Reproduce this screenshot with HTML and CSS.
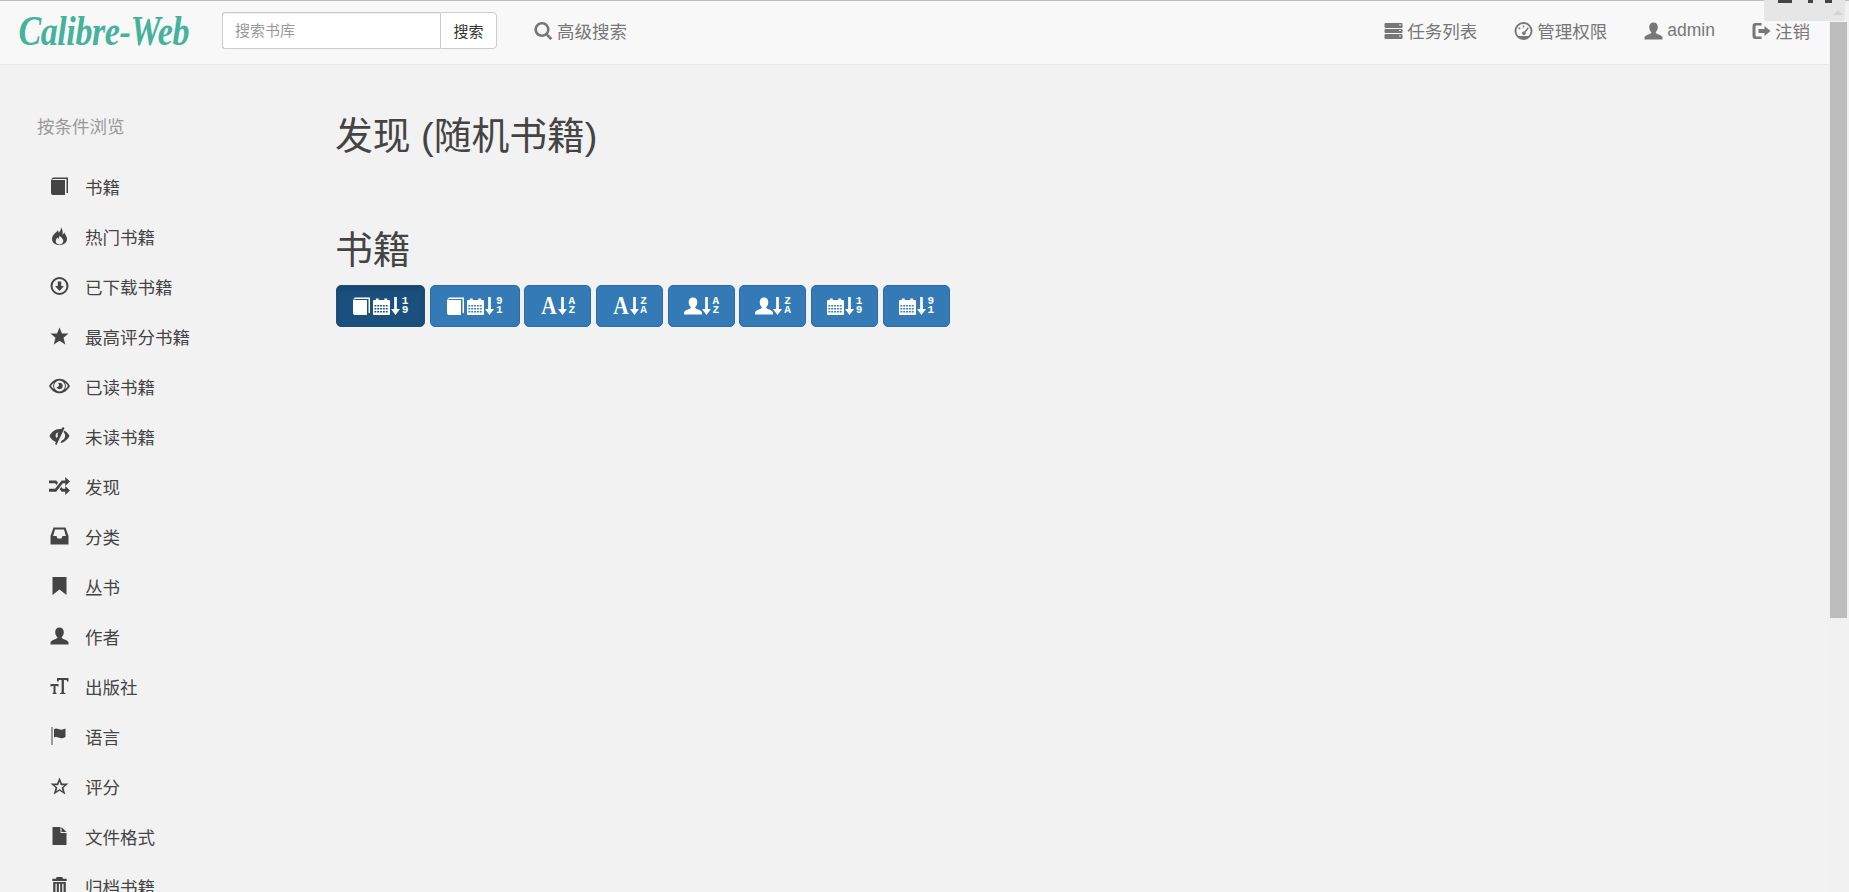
FILE: index.html
```html
<!DOCTYPE html>
<html lang="zh">
<head>
<meta charset="utf-8">
<title>Calibre-Web</title>
<link rel="stylesheet" href="styles.css">
</head>
<body>
<svg class="defs" width="0" height="0" aria-hidden="true">
  <defs>
    <symbol id="i-book" viewBox="0 0 17 18"><path d="M0 3h14v15H2a2 2 0 0 1-2-2ZM0 2.500 2 .5h15V16h-1.500V2H2.500L1.500 2.500Z"/></symbol>
    <symbol id="i-cal" viewBox="0 0 18 18" preserveAspectRatio="none"><path fill-rule="evenodd" d="M1 3h2V1.500h3V3h6V1.500h3V3h2a1 1 0 0 1 1 1v13a1 1 0 0 1-1 1H1a1 1 0 0 1-1-1V4a1 1 0 0 1 1-1Zm.5 5v1.500h2V8Zm3 0v1.500h2V8Zm3 0v1.500h2V8Zm3 0v1.500h2V8Zm3 0v1.500h2V8Zm-12 3v1.500h2V11Zm3 0v1.500h2V11Zm3 0v1.500h2V11Zm3 0v1.500h2V11Zm3 0v1.500h2V11Zm-12 3v1.500h2V14Zm3 0v1.500h2V14Zm3 0v1.500h2V14Zm3 0v1.500h2V14Zm3 0v1.500h2V14Z"/></symbol>
    <symbol id="i-arrow" viewBox="0 0 10 18" preserveAspectRatio="none"><path d="M3.500 0h3v12H10l-5 6-5-6h3.500Z"/></symbol>
    <symbol id="i-user" viewBox="0 0 18 18"><path d="M9 .5c2.700 0 4.300 2 4.300 4.700 0 2.300-1 4-2.200 5 .2 1 1 1.500 3 2.200 2 .7 3.400 1.500 3.900 3.100V17.500H0v-2c.5-1.600 1.900-2.400 3.900-3.100 2-.7 2.800-1.200 3-2.200-1.200-1-2.200-2.700-2.200-5C4.700 2.500 6.300.5 9 .5Z"/></symbol>
    <symbol id="i-fire" viewBox="0 0 17 18"><path fill-rule="evenodd" d="M9.500 0c1.200 2.600-.4 4.300-2 5.900C7.700 4.700 7.300 3.700 6.500 3.200 6 5.700 1 7.200 1 12c0 3.400 3 6 7.500 6S16 15.400 16 12c0-3.200-2.200-4.800-2.800-6.800-.3 1.100-.9 2-1.700 2.600C12.100 4.800 11.500 1.800 9.500 0ZM8.700 8.500c.5 1.700 3.600 2.700 3.600 5.600 0 2-1.700 3.400-3.800 3.400s-3.800-1.400-3.800-3.400c0-1.700 1.100-2.400 1.700-3.500.5.500.8.900.9 1.500.7-1 .8-2.300 1.400-3.600Z"/></symbol>
    <symbol id="i-down" viewBox="0 0 18 18"><path fill-rule="evenodd" d="M9 0a9 9 0 1 1 0 18A9 9 0 0 1 9 0Zm0 2a7 7 0 1 0 0 14A7 7 0 0 0 9 2ZM7.300 4.500h3.400V9H13.500L9 14 4.500 9h2.800Z"/></symbol>
    <symbol id="i-star" viewBox="0 0 18 18"><path d="m9 .5 2.500 6H18l-5 4.200 1.800 6.800L9 13.700 3.200 17.500 5 10.700 0 6.500h6.500Z"/></symbol>
    <symbol id="i-star-o" viewBox="0 0 18 18"><path fill-rule="evenodd" d="m9 .5 2.500 6H18l-5 4.200 1.800 6.800L9 13.700 3.200 17.500 5 10.700 0 6.500h6.500Zm0 4.300L7.700 8.200H4l2.900 2.400-1 3.600L9 12.100l3.100 2.100-1-3.600L14 8.200h-3.700Z"/></symbol>
    <symbol id="i-eye" viewBox="0 0 20 14"><path fill-rule="evenodd" d="M10 0c4.500 0 8 3.200 10 7-2 3.800-5.500 7-10 7S2 10.800 0 7c2-3.800 5.500-7 10-7Zm0 1.800A5.200 5.200 0 1 0 10 12.200 5.200 5.200 0 0 0 10 1.800ZM10 4a3 3 0 1 1-2.900 3.800c.8.400 2.300-.1 2.400-1.300.1-1-.5-1.900-1-2.100.4-.2 1-.4 1.500-.4ZM1.900 7c.7 1.100 1.600 2.100 2.700 2.900A6.500 6.500 0 0 1 4.600 4 10 10 0 0 0 1.900 7Zm13.500-3a6.500 6.500 0 0 1 0 6c1.100-.8 2-1.800 2.700-3a10 10 0 0 0-2.700-3Z"/></symbol>
    <symbol id="i-eye-off" viewBox="0 0 20 18"><path fill-rule="evenodd" d="M13.500 0 15 1 7 18l-1.500-1 .9-1.900C3.600 14 1.500 11.800 0 9c2-3.800 5.500-7 10-7h1.800ZM9 5.500A3 3 0 0 0 7.400 11l1-2.100C7.700 8.300 8 7 9 5.500Zm5.500-2C17 4.700 18.800 6.700 20 9c-1.800 3.500-5 6.500-9 6.900l1-2.200A5.200 5.200 0 0 0 14 5Z"/></symbol>
    <symbol id="i-shuffle" viewBox="0 0 22 16" preserveAspectRatio="none"><path d="M17 0l5 4-5 4V5.500h-2.500L7.500 13H0v-2.500h6.300L13.300 3H17ZM0 3h7.500l2 2.200-1.600 1.800-1.600-1.500H0Zm17 5 5 4-5 4v-3h-3.700l-2.200-2.400 1.700-1.800 1.600 1.700H17Z"/></symbol>
    <symbol id="i-inbox" viewBox="0 0 18 18"><path fill-rule="evenodd" d="M3 .5h12l3 8.500v8.500H0V9Zm1.500 2L2.600 9H6l1 2.500h4L12 9h3.400l-1.900-6.500Z"/></symbol>
    <symbol id="i-bookmark" viewBox="0 0 14 18"><path d="M0 0h14v18l-7-5.500L0 18Z"/></symbol>
    <symbol id="i-font" viewBox="0 0 18 18"><path d="M6.500 1H18v3.500h-1.500L16 3h-2.600v12.500l1.600.7V17H9.500v-.8l1.600-.7V3H8.500L8 4.500H6.500ZM0 7h8v2.500H7L6.700 9H5v6.500l1 .5v1H2v-1l1-.5V9H1.300L1 9.500H0Z"/></symbol>
    <symbol id="i-flag" viewBox="0 0 16 18"><path d="M0 0h1v18H0ZM2.500 2c2-1 3.500-.5 5 .2 2 .8 4 .5 6.500-.7V10c-2.500 1.300-4.500 1.600-6.500.8-1.500-.7-3-1-5-.2Z"/></symbol>
    <symbol id="i-file" viewBox="0 0 14 18"><path d="M0 0h8v6h6v12H0ZM9 0l5 5H9Z"/></symbol>
    <symbol id="i-trash" viewBox="0 0 18 20"><path fill-rule="evenodd" d="M6 0h6l1 2h4v2.500H1V2h4ZM2 5.500h14V20H2Zm2.500 2v10h1.500v-10Zm3.800 0v10h1.500v-10Zm3.700 0v10h1.500v-10Z"/></symbol>
    <symbol id="i-search" viewBox="0 0 18 18"><path fill-rule="evenodd" d="M7.500 0a7.500 7.500 0 0 1 6 12l4.300 4.200-2 1.800-4.200-4.300A7.500 7.500 0 1 1 7.500 0Zm0 2.500a5 5 0 1 0 0 10 5 5 0 0 0 0-10Z"/></symbol>
    <symbol id="i-tasks" viewBox="0 0 18 18"><path fill-rule="evenodd" d="M1 1h16a1 1 0 0 1 1 1v3a1 1 0 0 1-1 1H1a1 1 0 0 1-1-1V2a1 1 0 0 1 1-1Zm0 6h16a1 1 0 0 1 1 1v2a1 1 0 0 1-1 1H1a1 1 0 0 1-1-1V8a1 1 0 0 1 1-1Zm0 5h16a1 1 0 0 1 1 1v3a1 1 0 0 1-1 1H1a1 1 0 0 1-1-1v-3a1 1 0 0 1 1-1Zm13.500-9.500v1h2v-1Zm0 5.500v1h2V8Zm0 5.500v1h2v-1Z"/></symbol>
    <symbol id="i-dash" viewBox="0 0 18 18"><path fill-rule="evenodd" d="M9 0a9 9 0 1 1 0 18A9 9 0 0 1 9 0Zm0 2a7 7 0 0 0-5 11.900h10A7 7 0 0 0 9 2ZM8.300 3.500h1.400v2H8.300Zm-3.600 1.700 1.400 1.400-1 1-1.400-1.400Zm8.600 0 1 1-3.300 4.300a1.800 1.800 0 1 1-1.200-1Z"/></symbol>
    <symbol id="i-logout" viewBox="0 0 18 18"><path d="M3 1h6v2.500H4a1 1 0 0 0-1 1v9a1 1 0 0 0 1 1h5V17H3a3 3 0 0 1-3-3V4a3 3 0 0 1 3-3Zm9 3 6 5-6 5v-3H6V7h6Z"/></symbol>
  </defs>
</svg>

<header class="topbar">
  <div class="logo-box"><a class="logo">Calibre-Web</a></div>
  <form class="search">
    <input class="search-input" type="text" placeholder="搜索书库">
    <button class="search-btn" type="button">搜索</button>
  </form>
  <a class="nav-link adv"><svg class="nav-icon"><use href="#i-search"/></svg>高级搜索</a>
  <nav class="nav-right">
    <a class="nav-link"><svg class="nav-icon"><use href="#i-tasks"/></svg>任务列表</a>
    <a class="nav-link"><svg class="nav-icon"><use href="#i-dash"/></svg>管理权限</a>
    <a class="nav-link"><svg class="nav-icon"><use href="#i-user"/></svg>admin</a>
    <a class="nav-link"><svg class="nav-icon"><use href="#i-logout"/></svg>注销</a>
  </nav>
</header>

<div class="layout">
  <aside class="sidebar">
    <div class="side-title">按条件浏览</div>
    <ul class="side-list">
      <li><svg class="side-icon"><use href="#i-book"/></svg>书籍</li>
      <li><svg class="side-icon"><use href="#i-fire"/></svg>热门书籍</li>
      <li><svg class="side-icon"><use href="#i-down"/></svg>已下载书籍</li>
      <li><svg class="side-icon"><use href="#i-star"/></svg>最高评分书籍</li>
      <li><svg class="side-icon"><use href="#i-eye"/></svg>已读书籍</li>
      <li><svg class="side-icon"><use href="#i-eye-off"/></svg>未读书籍</li>
      <li><svg class="side-icon"><use href="#i-shuffle"/></svg>发现</li>
      <li><svg class="side-icon"><use href="#i-inbox"/></svg>分类</li>
      <li><svg class="side-icon"><use href="#i-bookmark"/></svg>丛书</li>
      <li><svg class="side-icon"><use href="#i-user"/></svg>作者</li>
      <li><svg class="side-icon"><use href="#i-font"/></svg>出版社</li>
      <li><svg class="side-icon"><use href="#i-flag"/></svg>语言</li>
      <li><svg class="side-icon"><use href="#i-star-o"/></svg>评分</li>
      <li><svg class="side-icon"><use href="#i-file"/></svg>文件格式</li>
      <li><svg class="side-icon"><use href="#i-trash"/></svg>归档书籍</li>
    </ul>
  </aside>
  <main class="content">
    <h1 class="page-title">发现 (随机书籍)</h1>
    <h2 class="section-title">书籍</h2>
    <div class="sort-bar">
      <a class="sort-btn wide active"><svg class="b-book"><use href="#i-book"/></svg><svg class="b-cal"><use href="#i-cal"/></svg><svg class="b-arrow"><use href="#i-arrow"/></svg><span class="stack"><i>1</i><i>9</i></span></a>
      <a class="sort-btn wide"><svg class="b-book"><use href="#i-book"/></svg><svg class="b-cal"><use href="#i-cal"/></svg><svg class="b-arrow"><use href="#i-arrow"/></svg><span class="stack"><i>9</i><i>1</i></span></a>
      <a class="sort-btn"><span class="b-a">A</span><svg class="b-arrow"><use href="#i-arrow"/></svg><span class="stack"><i>A</i><i>Z</i></span></a>
      <a class="sort-btn"><span class="b-a">A</span><svg class="b-arrow"><use href="#i-arrow"/></svg><span class="stack"><i>Z</i><i>A</i></span></a>
      <a class="sort-btn"><svg class="b-user"><use href="#i-user"/></svg><svg class="b-arrow"><use href="#i-arrow"/></svg><span class="stack"><i>A</i><i>Z</i></span></a>
      <a class="sort-btn"><svg class="b-user"><use href="#i-user"/></svg><svg class="b-arrow"><use href="#i-arrow"/></svg><span class="stack"><i>Z</i><i>A</i></span></a>
      <a class="sort-btn"><svg class="b-cal"><use href="#i-cal"/></svg><svg class="b-arrow"><use href="#i-arrow"/></svg><span class="stack"><i>1</i><i>9</i></span></a>
      <a class="sort-btn"><svg class="b-cal"><use href="#i-cal"/></svg><svg class="b-arrow"><use href="#i-arrow"/></svg><span class="stack"><i>9</i><i>1</i></span></a>
    </div>
  </main>
</div>

<div class="scrollbar"><div class="thumb"></div></div>
<div class="float-tab"><span class="float-marks"></span><span class="float-caret"></span></div>
</body>
</html>
```
FILE: styles.css
```css
* { box-sizing: border-box; }
html, body { height: 100%; }
body {
  margin: 0;
  height: 892px;
  overflow: hidden;
  background: #f2f2f2;
  color: #444;
  font-family: "Liberation Sans", "Noto Sans CJK SC", sans-serif;
  font-size: 17.5px;
  border-top: 1px solid #bdbdbd;
}
.defs { position: absolute; }
svg { fill: currentColor; }

.topbar {
  display: flex;
  align-items: center;
  height: 64px;
  width: 1829px;
  background: #f8f8f8;
  border-bottom: 1px solid #e7e7e7;
  padding: 0 19px 0 16px;
}
.logo-box { width: 206px; height: 46px; flex: none; margin-top: -4px; }
.logo {
  display: block;
  padding-left: 3px;
  color: #45b29d;
  font-family: "Liberation Serif", serif;
  font-style: italic;
  font-weight: 700;
  font-size: 42px;
  line-height: 46px;
  letter-spacing: -.5px;
  white-space: nowrap;
  transform: scaleX(.81);
  transform-origin: left center;
}
.search { display: flex; height: 37px; margin-top: -5px; }
.search-input {
  width: 218px;
  height: 37px;
  padding: 0 12px;
  font: 15px "Liberation Sans", "Noto Sans CJK SC", sans-serif;
  border: 1px solid #ccc;
  border-right: 0;
  border-radius: 3px 0 0 3px;
  background: #fff;
  box-shadow: inset 0 1px 1px rgba(0,0,0,.075);
}
.search-input::placeholder { color: #999; }
.search-btn {
  width: 57px;
  height: 37px;
  padding: 0;
  font: 15px "Liberation Sans", "Noto Sans CJK SC", sans-serif;
  color: #333;
  background: #fff;
  border: 1px solid #ccc;
  border-radius: 0 4px 4px 0;
}
.nav-link {
  display: flex;
  align-items: center;
  color: #777;
  font-size: 17.5px;
  white-space: nowrap;
  margin-top: -4px;
}
.nav-icon { width: 19px; height: 18px; margin-right: 4px; flex: none; }
.adv { margin-left: 37px; }
.nav-right { display: flex; gap: 37px; margin-left: auto; }

.layout { display: flex; }
.sidebar { width: 336px; padding: 49px 0 0 37px; flex: none; }
.side-title { color: #999; font-size: 17.5px; line-height: 26px; }
.side-list { list-style: none; margin: 21px 0 0; padding: 0 0 0 12px; }
.side-list li {
  display: flex;
  align-items: center;
  height: 50px;
  color: #444;
  white-space: nowrap;
}
.side-icon { width: 21px; height: 18px; margin-right: 15px; flex: none; }

.content { flex: 1; padding-top: 50px; }
.page-title, .section-title { font-size: 37.8px; font-weight: 400; line-height: 43px; color: #444; margin: 0 0 0 -1px; }
.section-title { margin-top: 71px; }
.sort-bar { display: flex; gap: 4.7px; margin-top: 13px; }
.sort-btn {
  display: flex;
  align-items: center;
  justify-content: center;
  width: 67px;
  height: 42px;
  color: #fff;
  background: #337ab7;
  border: 1px solid #2e6da4;
  border-radius: 5px;
}
.sort-btn.wide { width: 90px; }
.sort-btn.wide.active { width: 89px; }
.sort-btn.active {
  background: #1b4f7e;
  border-color: #204d74;
  box-shadow: inset 0 3px 5px rgba(0,0,0,.125);
}
.b-book { width: 17px; height: 18px; margin-right: 3px; flex: none; }
.b-cal { width: 17px; height: 18px; margin-right: 1px; flex: none; }
.b-arrow { width: 9px; height: 18px; margin-right: 2px; flex: none; }
.b-user { width: 18px; height: 18px; flex: none; }
.b-a {
  display: flex;
  justify-content: center;
  width: 16px;
  margin-right: 1px;
  font: 700 25px/18px "Liberation Serif", serif;
  transform: scaleX(.85);
}
.stack { display: flex; flex-direction: column; width: 6px; flex: none; }
.stack i {
  display: flex;
  justify-content: center;
  font: 700 11px/9px "Liberation Mono", monospace;
}

.scrollbar {
  position: absolute;
  top: 1px;
  right: 0;
  width: 19px;
  height: 891px;
  background: #f1f1f1;
}
.thumb { margin-top: 21px; width: 17px; height: 596px; background: #bcbcbc; }
.float-tab {
  position: absolute;
  top: 0;
  right: 4px;
  width: 81px;
  height: 21px;
  background: #e6e6e6;
  border-radius: 0 0 3px 3px;
}
.float-caret {
  position: absolute;
  right: 2px;
  bottom: 6px;
  border: 5px solid transparent;
  border-top: 0;
  border-bottom: 5px solid #d3d3d3;
}
.float-marks {
  position: absolute;
  left: 14px;
  top: 0;
  width: 55px;
  height: 3px;
  background: linear-gradient(90deg, #444 0 14px, transparent 14px 30px, #444 30px 35px, transparent 35px 47px, #444 47px 54px, transparent 54px);
}
```
